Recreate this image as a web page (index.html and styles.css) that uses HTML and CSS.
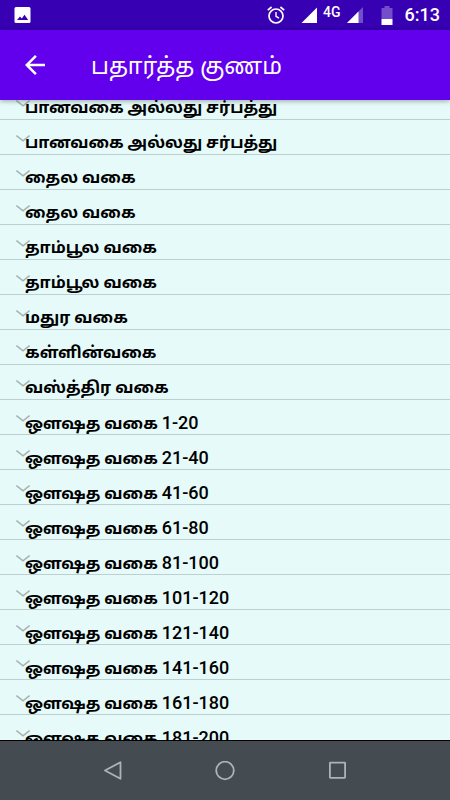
FILE: index.html
```html
<!DOCTYPE html>
<html lang="ta">
<head>
    <meta charset="UTF-8">
    <meta name="viewport" content="width=device-width, initial-scale=1.0">
    <title>பதார்த்த குணம்</title>
    <link rel="stylesheet" href="styles.css">
</head>
<body>
    <svg class="sprite" aria-hidden="true">
        <symbol id="chevron" viewBox="0 0 14 7">
            <path d="M0.4 0.6 L7 5.8 L13.6 0.6" fill="none" stroke="currentColor" stroke-width="1.5"/>
        </symbol>
    </svg>

    <div class="status-bar">
        <svg class="icon-image" width="18" height="18" viewBox="0 0 18 18">
            <rect x="0.5" y="1" width="16" height="16" rx="1.5" fill="#fff"/>
            <path d="M3 14 L6 10.5 L7.8 12.4 L10.5 8.8 L14.2 14 Z" fill="#3700b3"/>
        </svg>
        <svg class="icon-alarm" width="20" height="20" viewBox="0 0 20 20" fill="none" stroke="#fff">
            <circle cx="10" cy="11" r="7" stroke-width="1.7"/>
            <path d="M10 7 V11.3 L13 13.2" stroke-width="1.4"/>
            <path d="M1.8 5.2 L5.6 2 M18.2 5.2 L14.4 2" stroke-width="1.7"/>
        </svg>
        <svg class="icon-signal" width="16" height="16" viewBox="0 0 16 16">
            <path d="M0.5 16 L16 0.5 V16 Z" fill="#fff"/>
        </svg>
        <span class="network">4G</span>
        <svg class="icon-signal-low" width="16" height="16" viewBox="0 0 16 16">
            <path d="M0 16 L16 0 V16 Z" fill="#fff" fill-opacity="0.3"/>
            <path d="M0 16 L11.5 4.5 V16 Z" fill="#fff"/>
        </svg>
        <svg class="icon-battery" width="12" height="19" viewBox="0 0 12 19">
            <path d="M3.5 0 H8.5 V2 H11.5 V13 H0.5 V2 H3.5 Z" fill="#fff" fill-opacity="0.3"/>
            <rect x="0.5" y="13" width="11" height="6" rx="0.5" fill="#fff"/>
        </svg>
        <span class="clock">6:13</span>
    </div>

    <header class="app-bar">
        <button class="back" type="button" aria-label="Back">
            <svg width="20" height="20" viewBox="0 0 20 20">
                <path d="M20 8.75 H4.8 L11.8 1.77 L10 0 L0 10 L10 20 L11.77 18.23 L4.8 11.25 H20 Z" fill="#fff"/>
            </svg>
        </button>
        <h1>பதார்த்த குணம்</h1>
    </header>

    <main class="content">
        <ul class="list">
            <li><button class="row" type="button"><svg class="chevron"><use href="#chevron"/></svg>பானவகை அல்லது சர்பத்து</button></li>
            <li><button class="row" type="button"><svg class="chevron"><use href="#chevron"/></svg>பானவகை அல்லது சர்பத்து</button></li>
            <li><button class="row" type="button"><svg class="chevron"><use href="#chevron"/></svg>தைல வகை</button></li>
            <li><button class="row" type="button"><svg class="chevron"><use href="#chevron"/></svg>தைல வகை</button></li>
            <li><button class="row" type="button"><svg class="chevron"><use href="#chevron"/></svg>தாம்பூல வகை</button></li>
            <li><button class="row" type="button"><svg class="chevron"><use href="#chevron"/></svg>தாம்பூல வகை</button></li>
            <li><button class="row" type="button"><svg class="chevron"><use href="#chevron"/></svg>மதுர வகை</button></li>
            <li><button class="row" type="button"><svg class="chevron"><use href="#chevron"/></svg>கள்ளின்வகை</button></li>
            <li><button class="row" type="button"><svg class="chevron"><use href="#chevron"/></svg>வஸ்த்திர வகை</button></li>
            <li><button class="row" type="button"><svg class="chevron"><use href="#chevron"/></svg>ஔஷத வகை <span class="range">1-20</span></button></li>
            <li><button class="row" type="button"><svg class="chevron"><use href="#chevron"/></svg>ஔஷத வகை <span class="range">21-40</span></button></li>
            <li><button class="row" type="button"><svg class="chevron"><use href="#chevron"/></svg>ஔஷத வகை <span class="range">41-60</span></button></li>
            <li><button class="row" type="button"><svg class="chevron"><use href="#chevron"/></svg>ஔஷத வகை <span class="range">61-80</span></button></li>
            <li><button class="row" type="button"><svg class="chevron"><use href="#chevron"/></svg>ஔஷத வகை <span class="range">81-100</span></button></li>
            <li><button class="row" type="button"><svg class="chevron"><use href="#chevron"/></svg>ஔஷத வகை <span class="range">101-120</span></button></li>
            <li><button class="row" type="button"><svg class="chevron"><use href="#chevron"/></svg>ஔஷத வகை <span class="range">121-140</span></button></li>
            <li><button class="row" type="button"><svg class="chevron"><use href="#chevron"/></svg>ஔஷத வகை <span class="range">141-160</span></button></li>
            <li><button class="row" type="button"><svg class="chevron"><use href="#chevron"/></svg>ஔஷத வகை <span class="range">161-180</span></button></li>
            <li><button class="row" type="button"><svg class="chevron"><use href="#chevron"/></svg>ஔஷத வகை <span class="range">181-200</span></button></li>
        </ul>
    </main>

    <nav class="nav-bar">
        <button type="button" aria-label="Back">
            <svg width="20" height="20" viewBox="0 0 20 20">
                <path d="M17.5 1.2 V17.8 L2 9.5 Z" fill="none" stroke="currentColor" stroke-width="1.8" stroke-linejoin="round"/>
            </svg>
        </button>
        <button type="button" aria-label="Home">
            <svg width="20" height="20" viewBox="0 0 20 20">
                <circle cx="10" cy="9.5" r="8.8" fill="none" stroke="currentColor" stroke-width="1.8"/>
            </svg>
        </button>
        <button type="button" aria-label="Recent apps">
            <svg width="20" height="20" viewBox="0 0 20 20">
                <rect x="2.9" y="1.6" width="15.2" height="15.2" rx="0.5" fill="none" stroke="currentColor" stroke-width="1.8"/>
            </svg>
        </button>
    </nav>
</body>
</html>
```
FILE: styles.css
```css
* {
    box-sizing: border-box;
}
body {
    display: flex;
    flex-direction: column;
    height: 100vh;
    margin: 0;
    overflow: hidden;
    background-color: #e5faf9;
    font-family: Roboto, "Noto Sans Tamil", "Noto Sans", sans-serif;
}
button {
    padding: 0;
    border: 0;
    background: none;
    color: inherit;
    font: inherit;
    cursor: pointer;
}
svg {
    display: block;
    flex: none;
}
.sprite {
    position: absolute;
    width: 0;
    height: 0;
}

/* status bar */
.status-bar {
    display: flex;
    flex: none;
    align-items: center;
    height: 30px;
    padding: 0 10px 0 14px;
    background-color: #3700b3;
    color: white;
}
.icon-image {
    margin-right: auto;
}
.icon-signal {
    margin: 0 6px 0 15px;
}
.network {
    align-self: flex-start;
    margin-top: 4px;
    font-size: 14px;
    font-weight: 500;
    line-height: 16px;
}
.icon-signal-low {
    margin-left: 6px;
}
.icon-battery {
    margin: 0 12px 0 18px;
}
.clock {
    font-size: 18px;
    font-weight: 500;
    line-height: 32px;
}

/* app bar */
.app-bar {
    z-index: 1;
    display: flex;
    flex: none;
    align-items: center;
    gap: 46px;
    height: 70px;
    padding: 0 25px;
    background-color: #6200ee;
    box-shadow: 0 1px 5px rgba(0,0,0,0.35);
    color: white;
}
h1 {
    margin: 0;
    padding-top: 4px;
    font-size: 23px;
    font-weight: 400;
    line-height: 36px;
}

/* list, scrolled part of the way through its first row */
.content {
    flex: 1;
    min-height: 0;
    overflow: hidden;
}
.list {
    margin: -15px 0 0;
    padding: 0;
    list-style: none;
}
.row {
    position: relative;
    display: block;
    width: 100%;
    height: 35px;
    padding: 11px 25px 0;
    border-bottom: 1px solid #bdd0ce;
    color: black;
    font-size: 16px;
    font-weight: 700;
    line-height: 24px;
    text-align: left;
    white-space: nowrap;
}
.range {
    font-size: 18px;
    font-weight: 500;
}
.chevron {
    position: absolute;
    top: 15px;
    left: 16px;
    width: 14px;
    height: 7px;
    color: #a3b3b2;
}

/* system navigation */
.nav-bar {
    z-index: 1;
    display: flex;
    flex: none;
    justify-content: center;
    gap: 72px;
    height: 60px;
    border-top: 1px solid black;
    background-color: #454c51;
    color: #b0b3b6;
}
.nav-bar button {
    display: grid;
    place-items: center;
    width: 40px;
}
```
